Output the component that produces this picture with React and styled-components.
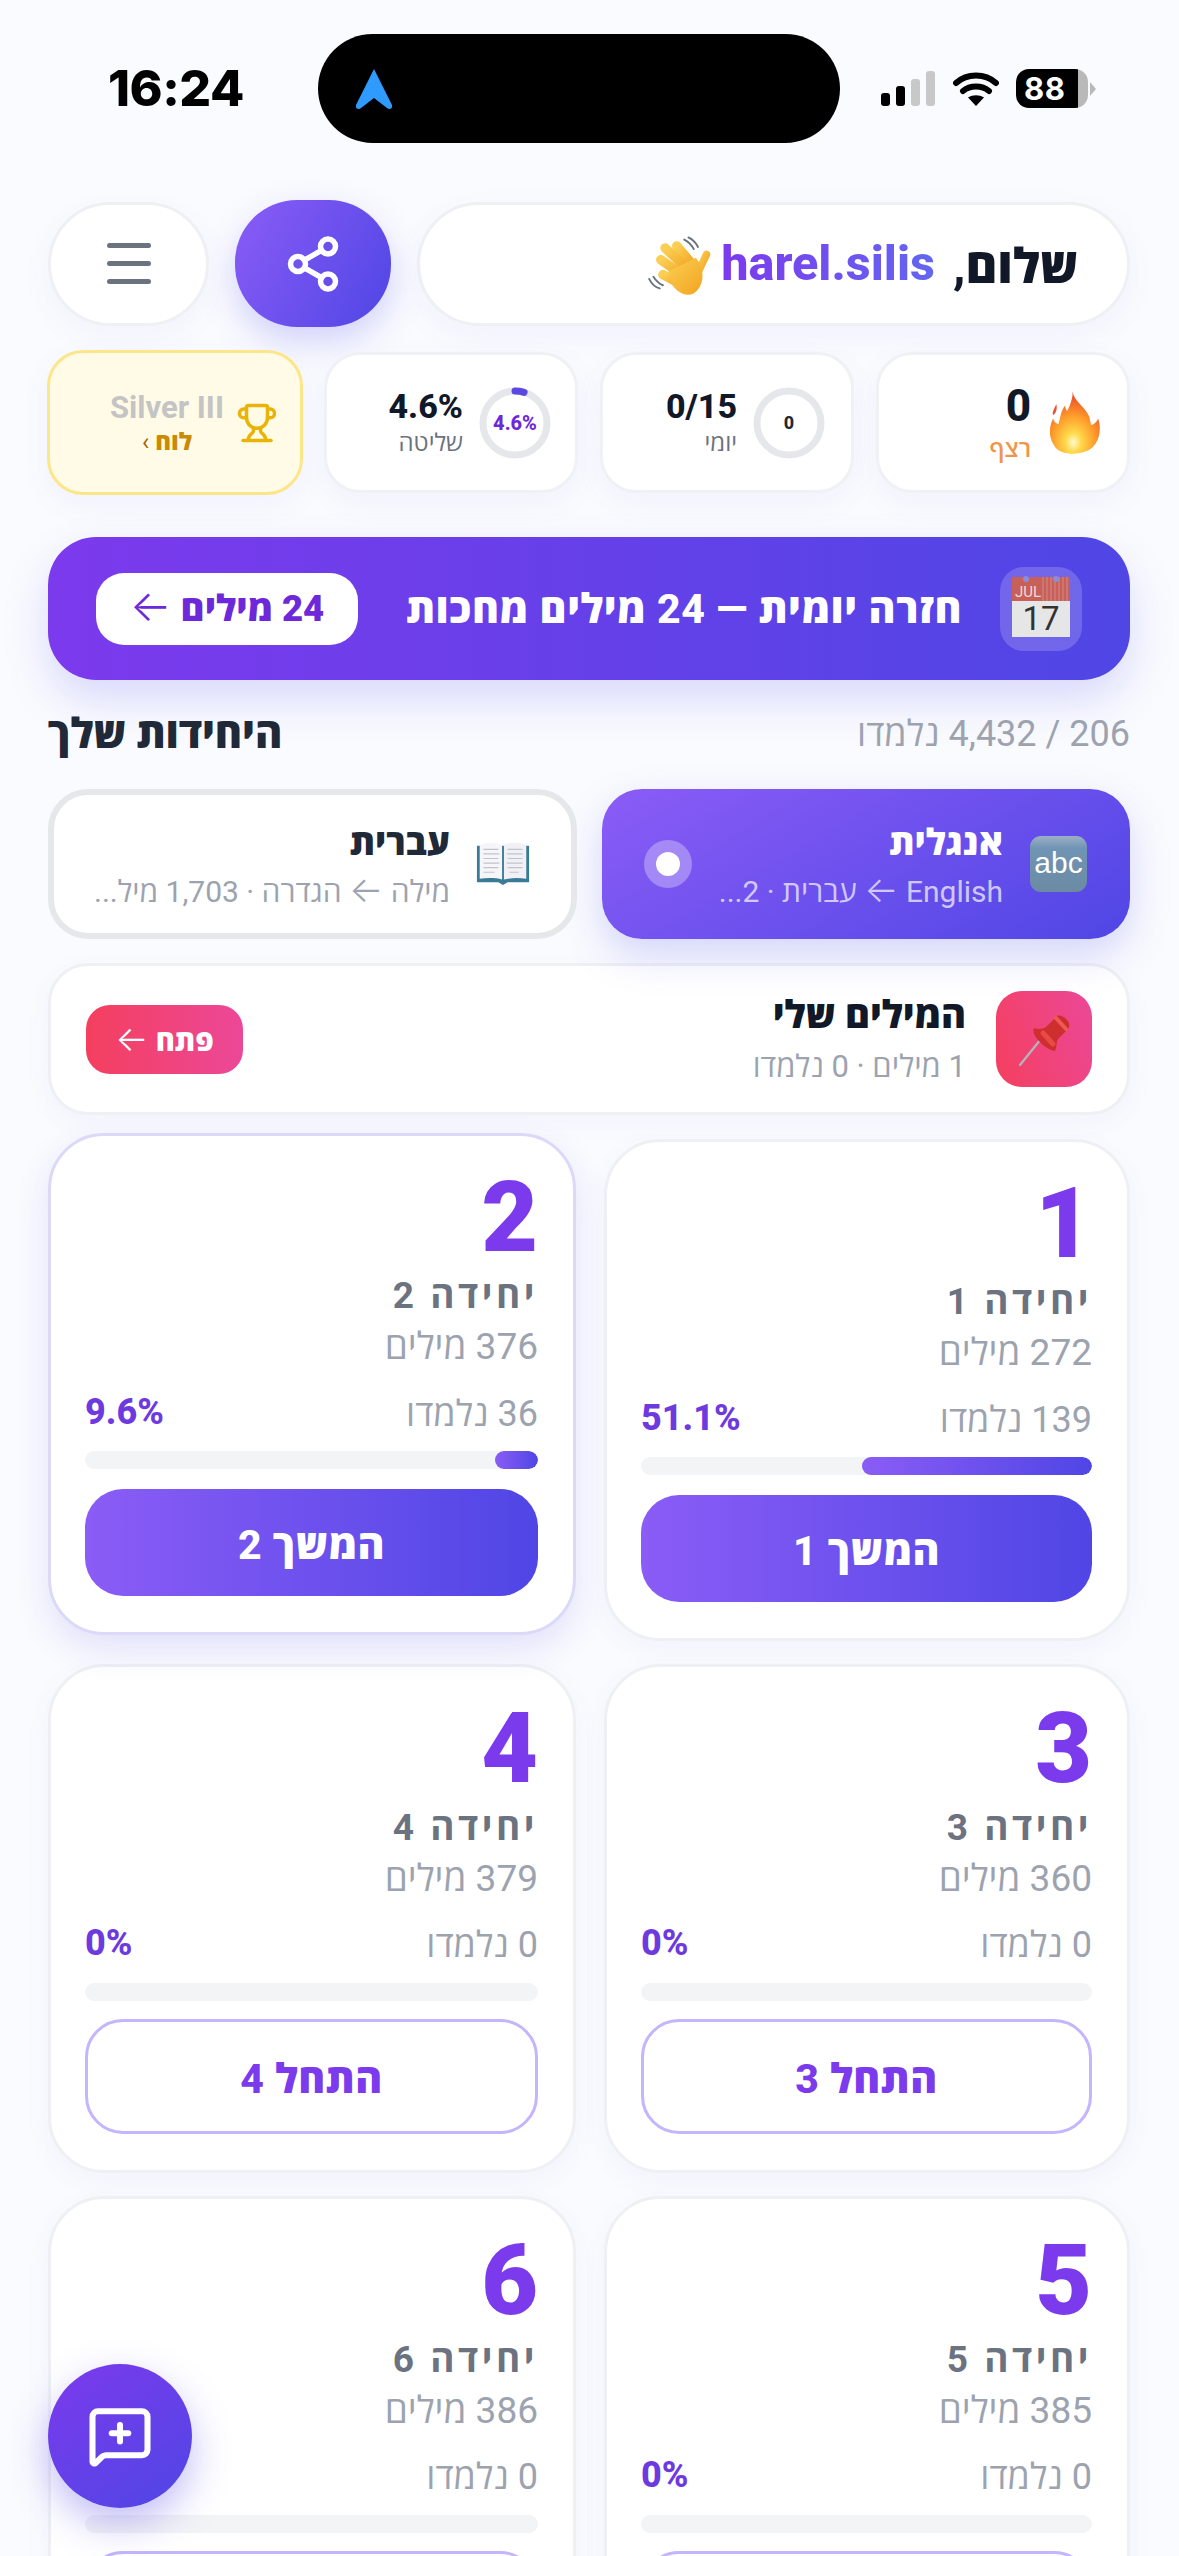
import React from "react";
import styled, { createGlobalStyle } from "styled-components";
import { Share2, Trophy, MessageSquarePlus } from "lucide-react";

const FONT = `Roboto, "Open Sans", "Liberation Sans", sans-serif`;

const Global = createGlobalStyle`
  html, body { margin: 0; padding: 0; background: #fafbfe; }
  * { box-sizing: border-box; }
  body { font-family: ${FONT}; }
`;

const Page = styled.div`
  position: relative;
  width: 1179px;
  height: 2556px;
  overflow: hidden;
  background: #fafbfe;
`;

/* status bar */
const StatusBar = styled.div`
  direction: ltr;
  height: 200px;
  padding: 34px 85px 0 108px;
  display: flex;
  align-items: flex-start;
`;
const Clock = styled.div`
  width: 210px;
  height: 109px;
  font: 800 50px/109px Inter, "Liberation Sans", sans-serif;
  color: #000;
  letter-spacing: -0.5px;
`;
const Island = styled.div`
  width: 522px;
  height: 109px;
  border-radius: 55px;
  background: #000;
  display: flex;
  align-items: center;
  padding-left: 37px;
`;
const StatusIcons = styled.div`
  height: 109px;
  margin-left: 40px;
  display: flex;
  align-items: center;
  gap: 17px;
`;
const Battery = styled.div`
  position: relative;
  width: 72px;
  height: 39px;
  border-radius: 13px;
  background: linear-gradient(90deg, #000 86%, #b9b9b9 86%);
  color: #fff;
  font: 700 31px/39px Inter, "Liberation Sans", sans-serif;
  padding-left: 8px;
  letter-spacing: 0.5px;
  &::after {
    content: "";
    position: absolute;
    right: -8px;
    top: 13px;
    border-left: 6px solid #b9b9b9;
    border-top: 7px solid transparent;
    border-bottom: 7px solid transparent;
  }
`;

/* main */
const Main = styled.main`
  direction: rtl;
  padding: 0 49px 0 48px;
`;
const Arrow = styled.span`
  font-family: Inter, sans-serif;
  font-weight: 300;
  font-size: 1.2em;
  line-height: 1px;
`;
const HeaderRow = styled.div`
  display: flex;
  align-items: center;
  gap: 26px;
  height: 127px;
`;
const Greeting = styled.div`
  flex: 1;
  height: 124px;
  border-radius: 62px;
  background: #fff;
  border: 3px solid #eef0f4;
  box-shadow: 0 10px 30px rgba(99, 102, 241, 0.06);
  padding: 0 49px;
  display: flex;
  align-items: center;
  gap: 10px;
  font-size: 48.5px;
  font-weight: 800;
  color: #111827;
`;
const UserName = styled.span`
  direction: ltr;
  margin: 0 8px 0 -4px;
  background: linear-gradient(90deg, #7c3aed, #6366f1);
  -webkit-background-clip: text;
  background-clip: text;
  color: transparent;
`;
const ShareButton = styled.button`
  width: 156px;
  height: 127px;
  border: 0;
  border-radius: 62px;
  color: #fff;
  background: linear-gradient(120deg, #8b5cf6, #4f46e5);
  box-shadow: 0 14px 34px rgba(99, 102, 241, 0.28);
  display: flex;
  align-items: center;
  justify-content: center;
`;
const MenuButton = styled.button`
  width: 161px;
  height: 124px;
  border-radius: 62px;
  background: #fff;
  border: 3px solid #eef0f4;
  box-shadow: 0 10px 30px rgba(99, 102, 241, 0.05);
  display: flex;
  flex-direction: column;
  align-items: center;
  justify-content: center;
  gap: 13px;
`;
const MenuBar = styled.span`
  width: 44px;
  height: 5px;
  border-radius: 3px;
  background: #6b7280;
`;

const StatsRow = styled.div`
  margin-top: 25px;
  display: grid;
  grid-template-columns: repeat(4, 1fr);
  gap: 22px;
  height: 141px;
`;
const StatCard = styled.div`
  background: ${(p) => (p.$gold ? "#fffbe6" : "#fff")};
  border: 3px solid ${(p) => (p.$gold ? "#fde68a" : "#f0f1f5")};
  border-radius: 36px;
  box-shadow: 0 10px 30px rgba(99, 102, 241, 0.06);
  display: flex;
  align-items: center;
  gap: ${(p) => p.$gap || 14}px;
  padding: 0 ${(p) => p.$pad || 26}px;
  margin: ${(p) => (p.$gold ? "-2px -1px" : "0")};
`;
const StatText = styled.div`
  display: flex;
  flex-direction: column;
  align-items: ${(p) => (p.$center ? "center" : "flex-start")};
  text-align: right;
`;
const StatValue = styled.div`
  font-size: ${(p) => p.$size || 34}px;
  line-height: 1.2;
  font-weight: 800;
  color: #111827;
  direction: ltr;
`;
const StatLabel = styled.div`
  font-size: 24px;
  line-height: 1.35;
  font-weight: ${(p) => (p.$orange ? 600 : 500)};
  color: ${(p) => (p.$orange ? "#f0954a" : "#6b7280")};
`;
const Ring = styled.div`
  position: relative;
  width: 72px;
  height: 72px;
  flex: none;
  display: flex;
  align-items: center;
  justify-content: center;
`;
const RingSvg = styled.svg`
  position: absolute;
  inset: 0;
`;
const RingText = styled.span`
  font-size: ${(p) => (p.$purple ? 20 : 18)}px;
  font-weight: 800;
  color: ${(p) => (p.$purple ? "#6d28d9" : "#1f2937")};
`;
const GoldName = styled.div`
  direction: ltr;
  font-size: 31px;
  line-height: 38px;
  font-weight: 700;
  color: #c4c4c4;
  white-space: nowrap;
`;
const GoldLink = styled.div`
  font-size: 24px;
  line-height: 30px;
  font-weight: 800;
  color: #ca8a04;
`;
const GoldChevron = styled.span`
  font-weight: 400;
  color: #a16207;
`;

const Banner = styled.div`
  margin-top: 44px;
  height: 143px;
  border-radius: 48px;
  background: linear-gradient(270deg, #4f46e5, #7c3aed);
  box-shadow: 0 20px 44px rgba(99, 102, 241, 0.22);
  display: flex;
  align-items: center;
  justify-content: space-between;
  padding: 0 48px;
`;
const BannerStart = styled.div`
  display: flex;
  align-items: center;
  gap: 38px;
`;
const BannerTile = styled.div`
  width: 82px;
  height: 84px;
  border-radius: 24px;
  background: rgba(255, 255, 255, 0.18);
  padding-bottom: 4px;
  display: flex;
  align-items: center;
  justify-content: center;
`;
const Calendar = styled.div`
  width: 58px;
  height: 60px;
  direction: ltr;
  display: flex;
  flex-direction: column;
  font-family: Roboto, sans-serif;
`;
const CalendarTop = styled.div`
  position: relative;
  height: 24px;
  background: repeating-linear-gradient(90deg, #c8605a 0 2px, #cf756f 2px 4px) right / 30px 100% no-repeat, #c8605a;
  color: #f3d9d6;
  font-size: 15px;
  line-height: 30px;
  padding-left: 3px;
  &::before,
  &::after {
    content: "";
    position: absolute;
    top: -1px;
    width: 6px;
    height: 6px;
    border-radius: 50%;
    background: #8b8bdc;
  }
  &::before {
    left: 11px;
  }
  &::after {
    right: 11px;
  }
`;
const CalendarDay = styled.div`
  flex: 1;
  background: #e6e6e6;
  color: #333;
  font-size: 33px;
  line-height: 36px;
  text-align: center;
`;
const BannerTitle = styled.div`
  font-size: 41px;
  font-weight: 800;
  color: #fff;
  letter-spacing: 0.6px;
  white-space: nowrap;
  padding-bottom: 4px;
`;
const BannerButton = styled.button`
  width: 262px;
  height: 72px;
  border: 0;
  border-radius: 28px;
  background: #fff;
  color: #6d28d9;
  font-family: ${FONT};
  font-size: 36.5px;
  font-weight: 900;
  padding: 0 0 4px;
`;

const SectionHead = styled.div`
  margin-top: 32px;
  height: 40px;
  display: flex;
  align-items: center;
  justify-content: space-between;
`;
const SectionCount = styled.div`
  font-size: 36px;
  color: #9ca3af;
`;
const SectionTitle = styled.h2`
  margin: 0;
  font-size: 41.5px;
  font-weight: 800;
  color: #1f2937;
`;

const Tabs = styled.div`
  margin-top: 37px;
  display: grid;
  grid-template-columns: 528px 529px;
  gap: 25px;
`;
const Tab = styled.div`
  height: 150px;
  border-radius: 40px;
  display: flex;
  align-items: center;
  gap: ${(p) => (p.$active ? 27 : 26)}px;
  padding: ${(p) => (p.$active ? "0 43px 0 42px" : "0 41px 0 42px")};
  background: ${(p) => (p.$active ? "linear-gradient(150deg, #8b5cf6, #4f46e5)" : "#fff")};
  border: ${(p) => (p.$active ? "0" : "6px solid #e5e7eb")};
  box-shadow: ${(p) => (p.$active ? "0 16px 38px rgba(99,102,241,.25)" : "none")};
`;
const TabBody = styled.div`
  flex: 1;
  min-width: 0;
`;
const TabTitle = styled.div`
  font-size: 36px;
  line-height: 52px;
  font-weight: 800;
  color: ${(p) => (p.$active ? "#fff" : "#1f2937")};
`;
const TabSub = styled.div`
  margin-top: 3px;
  font-size: 30px;
  line-height: 40px;
  white-space: nowrap;
  color: ${(p) => (p.$active ? "rgba(255,255,255,.7)" : "#9ca3af")};
`;
const Radio = styled.div`
  width: 48px;
  height: 48px;
  flex: none;
  border-radius: 50%;
  background: rgba(255, 255, 255, 0.3);
  display: flex;
  align-items: center;
  justify-content: center;
  &::after {
    content: "";
    width: 24px;
    height: 24px;
    border-radius: 50%;
    background: #fff;
  }
`;

const WordsCard = styled.div`
  margin-top: 24px;
  height: 152px;
  border-radius: 40px;
  background: #fff;
  border: 3px solid #eef0f4;
  box-shadow: 0 8px 26px rgba(99, 102, 241, 0.05);
  display: flex;
  align-items: center;
  padding: 0 35px;
  gap: 30px;
`;
const WordsTile = styled.div`
  width: 96px;
  height: 96px;
  flex: none;
  border-radius: 26px;
  background: linear-gradient(250deg, #ec4899, #f43f5e);
  display: flex;
  align-items: center;
  justify-content: center;
`;
const WordsBody = styled.div`
  flex: 1;
`;
const WordsTitle = styled.div`
  font-size: 38px;
  line-height: 46px;
  font-weight: 800;
  color: #111827;
`;
const WordsSub = styled.div`
  margin-top: 9px;
  font-size: 31px;
  line-height: 40px;
  color: #9ca3af;
`;
const WordsButton = styled.button`
  width: 157px;
  height: 69px;
  border: 0;
  border-radius: 24px;
  background: linear-gradient(90deg, #f43f5e, #ec4899);
  color: #fff;
  font-family: ${FONT};
  font-size: 29px;
  font-weight: 800;
`;

const UnitGrid = styled.div`
  margin-top: 24px;
  display: grid;
  grid-template-columns: 526px 528px;
  grid-template-rows: 502px auto auto;
  column-gap: 28px;
  row-gap: 23px;
`;
const UnitCard = styled.div`
  align-self: start;
  background: #fff;
  border-radius: 56px;
  border: 3px solid ${(p) => (p.$raised ? "#dcd8f8" : "#eef0f4")};
  box-shadow: ${(p) =>
    p.$raised ? "0 14px 34px rgba(79,70,229,.14)" : "0 8px 26px rgba(99,102,241,.05)"};
  transform: ${(p) => (p.$raised ? "translateY(-6px)" : "none")};
  padding: 36px 35px 36px 34px;
`;
const UnitNumber = styled.div`
  font-size: 98px;
  line-height: 92px;
  font-weight: 900;
  color: #7c3aed;
`;
const UnitTitle = styled.div`
  margin-top: ${(p) => (p.$filled ? 10 : 11)}px;
  font-size: 37px;
  line-height: 44px;
  font-weight: 700;
  letter-spacing: 3.5px;
  color: #6b7280;
`;
const UnitWords = styled.div`
  margin-top: 9px;
  font-size: 37px;
  line-height: 40px;
  color: #9ca3af;
`;
const UnitRow = styled.div`
  margin-top: ${(p) => (p.$filled ? 25 : 24)}px;
  height: 40px;
  display: flex;
  align-items: center;
  justify-content: space-between;
`;
const UnitLearned = styled.div`
  font-size: 36px;
  color: #9ca3af;
`;
const UnitPercent = styled.div`
  direction: ltr;
  font-size: 36px;
  font-weight: 800;
  color: #6d3ae0;
`;
const Track = styled.div`
  margin-top: ${(p) => (p.$filled ? 19 : 20)}px;
  height: 18px;
  border-radius: 9px;
  background: #f3f4f6;
  overflow: hidden;
`;
const Fill = styled.div`
  height: 100%;
  border-radius: 9px;
  background: linear-gradient(90deg, #8b5cf6, #4f46e5);
`;
const UnitButton = styled.button`
  margin-top: ${(p) => (p.$filled ? 20 : 18)}px;
  width: 100%;
  height: ${(p) => (p.$filled ? 107 : 115)}px;
  border-radius: 38px;
  border: ${(p) => (p.$filled ? "0" : "3px solid #c4b5fd")};
  background: ${(p) => (p.$filled ? "linear-gradient(90deg, #8b5cf6, #4f46e5)" : "#fff")};
  color: ${(p) => (p.$filled ? "#fff" : "#7c3aed")};
  font-family: ${FONT};
  font-size: 41px;
  font-weight: 800;
  letter-spacing: 0.5px;
`;

const Fab = styled.button`
  position: absolute;
  left: 48px;
  top: 2364px;
  width: 144px;
  height: 144px;
  border: 0;
  border-radius: 50%;
  color: #fff;
  background: linear-gradient(145deg, #7c3aed, #4f46e5);
  box-shadow: 0 16px 38px rgba(79, 70, 229, 0.35);
  display: flex;
  align-items: center;
  justify-content: center;
`;

/* drawings */
const SignalIcon = () => (
  <svg width="56" height="36" viewBox="0 0 56 36">
    <rect x="1" y="22" width="9" height="13" rx="3" fill="#000" />
    <rect x="16" y="15" width="9" height="20" rx="3" fill="#000" />
    <rect x="31" y="8" width="9" height="27" rx="3" fill="#c8c8c8" />
    <rect x="46" y="0" width="9" height="35" rx="3" fill="#c8c8c8" />
  </svg>
);
const WifiIcon = () => (
  <svg width="46" height="36" viewBox="0 0 46 36" fill="none">
    <path d="M3 12C14 2 32 2 43 12" stroke="#000" strokeWidth="6" strokeLinecap="round" />
    <path d="M10 20C17 14 29 14 36 20" stroke="#000" strokeWidth="6" strokeLinecap="round" />
    <path d="M23 35L15 26.500C20 23.500 26 23.500 31 26.500Z" fill="#000" />
  </svg>
);
const NavArrow = () => (
  <svg width="38" height="42" viewBox="0 0 38 42">
    <path d="M19 1L37 37C38 41 34 42 32 40L19 30L6 40C4 42 0 41 1 37Z" fill="#2f9bff" />
  </svg>
);
const WaveHand = () => (
  <svg width="68" height="68" viewBox="16 16 64 64" fill="none">
    <defs>
      <linearGradient id="hand" x1="0" y1="0" x2="1" y2="1">
        <stop offset="0" stopColor="#fbcf55" />
        <stop offset="1" stopColor="#f2a41f" />
      </linearGradient>
    </defs>
    <g stroke="#6b7280" strokeWidth="1.800" strokeLinecap="round">
      <path d="M51 25C55 27 58 30 60 34" />
      <path d="M55 23C59 25 62 28 64 32" />
      <path d="M18 62C20 66 24 70 28 71" />
      <path d="M22 60C24 63 26 66 31 68" />
    </g>
    <g stroke="url(#hand)" strokeWidth="9" strokeLinecap="round">
      <path d="M60 50L44 31" />
      <path d="M56 54L33 33" />
      <path d="M52 60L29 44" />
      <path d="M50 68L31 58" />
      <path d="M63 58L72 39" strokeWidth="7" />
    </g>
    <path d="M36 55L62 42C70 52 70 64 64 72C58 80 47 78 40 68Z" fill="url(#hand)" />
  </svg>
);
const Flame = () => (
  <svg width="56" height="68" viewBox="18 20 50 62">
    <defs>
      <radialGradient id="flame" cx="0.47" cy="0.82" r="0.8">
        <stop offset="0" stopColor="#fffbd0" />
        <stop offset="0.2" stopColor="#ffd84a" />
        <stop offset="0.55" stopColor="#ff9a2a" />
        <stop offset="1" stopColor="#e8402a" />
      </radialGradient>
    </defs>
    <path d="M41 22C41 30 52 36 56 45C57 49 57 51 58 53C61 52 63 50 64 47C67 54 66 66 60 72C54 80 32 82 25 73C20 67 18 57 23 47C24 50 26 52 28 52C30 45 30 40 34 35C34 38 35 39 36 40C39 34 41 28 41 22Z" fill="url(#flame)" />
    <path d="M26 34C24 38 22 41 23 44C26 42 27 38 26 34Z" fill="#e8543a" />
  </svg>
);
const AbcTile = styled.div`
  width: 57px;
  height: 56px;
  flex: none;
  border-radius: 11px;
  background: linear-gradient(180deg, #9cb0c4 0, #7094b4 22%, #6c8ba3 100%);
  color: #fff;
  direction: ltr;
  font: 500 30px/54px "Liberation Sans", Arial, sans-serif;
  text-align: center;
`;
const BookIcon = () => (
  <svg width="54" height="44" viewBox="0 0 58 48" preserveAspectRatio="none">
    <path d="M1 4H57V44H34L29 47L24 44H1Z" fill="#3a7a96" />
    <path d="M4 3C12 0 22 0 28 3V41C22 39 12 39 4 40Z" fill="#f6f6f8" />
    <path d="M54 3C46 0 36 0 30 3V41C36 39 46 39 54 40Z" fill="#f1f1f5" />
    <g stroke="#c2c2cc" strokeWidth="1.300">
      <path d="M8 8H24M8 13H25M8 18H24M8 23H25M8 28H24M8 33H20" />
      <path d="M34 8H50M33 13H50M34 18H50M33 23H50M34 28H50M36 33H46" />
    </g>
  </svg>
);
const PinIcon = () => (
  <svg width="60" height="60" viewBox="0 0 60 60">
    <path d="M6 56L27 30" stroke="#b5b5bc" strokeWidth="2.200" strokeLinecap="round" />
    <path d="M20 19C25 21 30 20 33 17L42 8C44 5 50 7 53 11C56 14 56 19 53 21L44 30C42 34 43 38 41 42C38 42 30 38 26 33C22 29 18 24 20 19Z" fill="#cf2e2e" />
    <path d="M42 9L52 20" stroke="#ee5a52" strokeWidth="4" strokeLinecap="round" />
    <path d="M29 24L39 35" stroke="#ea4a45" strokeWidth="5" strokeLinecap="round" />
  </svg>
);

const RingMeter = ({ value, label, purple }) => {
  const c = 2 * Math.PI * 32;
  return (
    <Ring>
      <RingSvg width="72" height="72" viewBox="0 0 72 72" fill="none">
        <circle cx="36" cy="36" r="32" stroke="#e5e7eb" strokeWidth="7" />
        {value > 0 && (
          <circle
            cx="36"
            cy="36"
            r="32"
            stroke="#5b48e0"
            strokeWidth="7"
            strokeLinecap="round"
            strokeDasharray={`${(value / 100) * c} ${c}`}
            transform="rotate(-90 36 36)"
          />
        )}
      </RingSvg>
      <RingText $purple={purple}>{label}</RingText>
    </Ring>
  );
};

const units = [
  { n: 1, words: 272, learned: 139, pct: 51.1, action: "המשך" },
  { n: 2, words: 376, learned: 36, pct: 9.6, action: "המשך", raised: true },
  { n: 3, words: 360, learned: 0, pct: 0, action: "התחל" },
  { n: 4, words: 379, learned: 0, pct: 0, action: "התחל" },
  { n: 5, words: 385, learned: 0, pct: 0, action: "התחל" },
  { n: 6, words: 386, learned: 0, pct: 0, action: "התחל" },
];

const Unit = ({ n, words, learned, pct, action, raised }) => {
  const filled = pct > 0;
  return (
    <UnitCard $raised={raised}>
      <UnitNumber>{n}</UnitNumber>
      <UnitTitle $filled={filled}>יחידה {n}</UnitTitle>
      <UnitWords>{words} מילים</UnitWords>
      <UnitRow $filled={filled}>
        <UnitLearned>{learned} נלמדו</UnitLearned>
        <UnitPercent>{pct}%</UnitPercent>
      </UnitRow>
      <Track $filled={filled}>{filled && <Fill style={{ width: `${pct}%` }} />}</Track>
      <UnitButton $filled={filled}>
        {action} {n}
      </UnitButton>
    </UnitCard>
  );
};

export default function App() {
  return (
    <Page>
      <Global />
      <StatusBar>
        <Clock>16:24</Clock>
        <Island>
          <NavArrow />
        </Island>
        <StatusIcons>
          <SignalIcon />
          <WifiIcon />
          <Battery>88</Battery>
        </StatusIcons>
      </StatusBar>
      <Main>
        <HeaderRow>
          <Greeting>
            <span>שלום,</span>
            <UserName>harel.silis</UserName>
            <WaveHand />
          </Greeting>
          <ShareButton>
            <Share2 size={60} strokeWidth={2.2} />
          </ShareButton>
          <MenuButton>
            <MenuBar />
            <MenuBar />
            <MenuBar />
          </MenuButton>
        </HeaderRow>

        <StatsRow>
          <StatCard $gap={16} $pad={24}>
            <Flame />
            <StatText>
              <StatValue $size={44}>0</StatValue>
              <StatLabel $orange>רצף</StatLabel>
            </StatText>
          </StatCard>
          <StatCard $gap={16}>
            <RingMeter value={0} label="0" />
            <StatText>
              <StatValue>0/15</StatValue>
              <StatLabel>יומי</StatLabel>
            </StatText>
          </StatCard>
          <StatCard $gap={16} $pad={24}>
            <RingMeter value={4.6} label="4.6%" purple />
            <StatText>
              <StatValue>4.6%</StatValue>
              <StatLabel>שליטה</StatLabel>
            </StatText>
          </StatCard>
          <StatCard $gold $gap={12} $pad={22}>
            <Trophy size={42} color="#eab308" strokeWidth={2} />
            <StatText $center>
              <GoldName>Silver III</GoldName>
              <GoldLink>
                לוח <GoldChevron>›</GoldChevron>
              </GoldLink>
            </StatText>
          </StatCard>
        </StatsRow>

        <Banner>
          <BannerStart>
            <BannerTile>
              <Calendar>
                <CalendarTop>JUL</CalendarTop>
                <CalendarDay>17</CalendarDay>
              </Calendar>
            </BannerTile>
            <BannerTitle>חזרה יומית — 24 מילים מחכות</BannerTitle>
          </BannerStart>
          <BannerButton>
            24 מילים <Arrow>←</Arrow>
          </BannerButton>
        </Banner>

        <SectionHead>
          <SectionCount>206 / 4,432 נלמדו</SectionCount>
          <SectionTitle>היחידות שלך</SectionTitle>
        </SectionHead>

        <Tabs>
          <Tab $active>
            <AbcTile>abc</AbcTile>
            <TabBody>
              <TabTitle $active>אנגלית</TabTitle>
              <TabSub $active>
                English <Arrow>←</Arrow> עברית · 2...
              </TabSub>
            </TabBody>
            <Radio />
          </Tab>
          <Tab>
            <BookIcon />
            <TabBody>
              <TabTitle>עברית</TabTitle>
              <TabSub>
                מילה <Arrow>←</Arrow> הגדרה · 1,703 מיל...
              </TabSub>
            </TabBody>
          </Tab>
        </Tabs>

        <WordsCard>
          <WordsTile>
            <PinIcon />
          </WordsTile>
          <WordsBody>
            <WordsTitle>המילים שלי</WordsTitle>
            <WordsSub>1 מילים · 0 נלמדו</WordsSub>
          </WordsBody>
          <WordsButton>
            פתח <Arrow>←</Arrow>
          </WordsButton>
        </WordsCard>

        <UnitGrid>
          {units.map((u) => (
            <Unit key={u.n} {...u} />
          ))}
        </UnitGrid>
      </Main>
      <Fab>
        <MessageSquarePlus size={66} strokeWidth={2.2} />
      </Fab>
    </Page>
  );
}
